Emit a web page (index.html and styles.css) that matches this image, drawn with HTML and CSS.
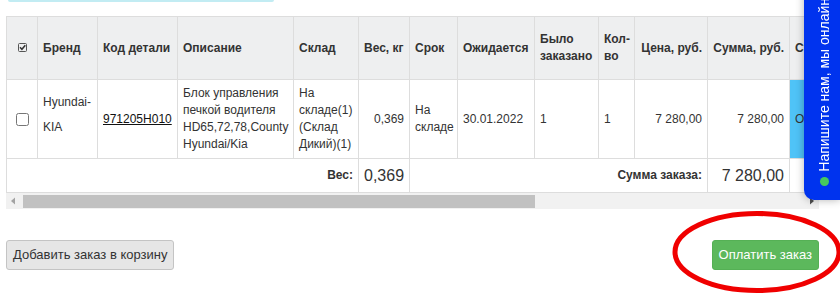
FILE: index.html
```html
<!DOCTYPE html>
<html lang="ru">
<head>
<meta charset="utf-8">
<title>Заказ</title>
<link rel="stylesheet" href="styles.css">
</head>
<body>
<div class="notice-edge"></div>
<main class="page">
  <div class="table-wrap">
    <table class="order">
      <colgroup>
        <col class="c-check"><col class="c-brand"><col class="c-code"><col class="c-desc"><col class="c-stock">
        <col class="c-weight"><col class="c-term"><col class="c-expected"><col class="c-ordered"><col class="c-qty">
        <col class="c-price"><col class="c-sum"><col class="c-status"><col class="c-comment"><col class="c-extra">
      </colgroup>
      <thead>
        <tr class="head-row">
          <th class="center">
            <svg class="check-icon" width="9" height="9" viewBox="0 0 9 9"><rect x="0.5" y="0.5" width="8" height="8" rx="1" fill="none" stroke="#555" stroke-width="1"/><path d="M2 4.3 L3.9 6.3 L7.3 2.2" fill="none" stroke="#333" stroke-width="1.5"/></svg>
          </th>
          <th>Бренд</th>
          <th>Код детали</th>
          <th>Описание</th>
          <th>Склад</th>
          <th>Вес, кг</th>
          <th>Срок</th>
          <th>Ожидается</th>
          <th>Было<br>заказано</th>
          <th>Кол-<br>во</th>
          <th class="right">Цена, руб.</th>
          <th class="right">Сумма, руб.</th>
          <th>Статус</th>
          <th>Комментарий</th>
          <th></th>
        </tr>
      </thead>
      <tbody>
        <tr class="body-row">
          <td class="center"><input type="checkbox" class="row-check"></td>
          <td class="brand">Hyundai-<br>KIA</td>
          <td><a href="#" class="part-link">971205H010</a></td>
          <td>Блок управления<br>печкой водителя<br>HD65,72,78,County<br>Hyundai/Kia</td>
          <td>На<br>складе(1)<br>(Склад<br>Дикий)(1)</td>
          <td class="right">0,369</td>
          <td>На<br>складе</td>
          <td>30.01.2022</td>
          <td>1</td>
          <td>1</td>
          <td class="right">7 280,00</td>
          <td class="right">7 280,00</td>
          <td class="status">Ожидается</td>
          <td></td>
          <td></td>
        </tr>
      </tbody>
      <tfoot>
        <tr class="foot-row">
          <td colspan="5" class="right label">Вес:</td>
          <td class="right total">0,369</td>
          <td colspan="5" class="right label">Сумма заказа:</td>
          <td class="right total">7 280,00</td>
          <td colspan="3"></td>
        </tr>
      </tfoot>
    </table>
  </div>
  <div class="hscroll" aria-hidden="true">
    <span class="hscroll-btn">
      <svg width="16" height="16" viewBox="0 0 16 16"><path d="M5 8 L9 4.5 L9 11.5 Z" fill="#a3a3a3"/></svg>
    </span>
    <span class="hscroll-track"><span class="hscroll-thumb"></span></span>
    <span class="hscroll-btn">
      <svg width="16" height="16" viewBox="0 0 16 16"><path d="M11 8 L7 4.5 L7 11.5 Z" fill="#505050"/></svg>
    </span>
  </div>
  <div class="actions">
    <button type="button" class="btn btn-default">Добавить заказ в корзину</button>
    <button type="button" class="btn btn-success">Оплатить заказ</button>
  </div>
</main>
<aside class="chat-tab">
  <span class="chat-label">Напишите нам, мы онлайн!</span>
  <span class="chat-dot"></span>
</aside>
<svg class="annotation" width="840" height="293" viewBox="0 0 840 293">
  <ellipse cx="757" cy="252" rx="82" ry="38.5" fill="none" stroke="#f00000" stroke-width="5"/>
</svg>
</body>
</html>
```

FILE: styles.css
```css
html, body {
  margin: 0;
  padding: 0;
  background: #fff;
}
body {
  font-family: "Liberation Sans", Arial, sans-serif;
  font-size: 12px;
  line-height: 17px;
  color: #333;
  overflow: hidden;
  height: 293px;
  position: relative;
}
.notice-edge {
  width: 266px;
  height: 2px;
  margin-left: 8px;
  background: #c2ecf3;
  border-radius: 0 0 4px 4px;
}
.page {
  width: 813px;
  padding: 14px 0 0 6px;
}
.table-wrap {
  width: 813px;
  overflow: hidden;
}
.hscroll {
  display: flex;
  width: 813px;
  height: 16px;
  background: #f1f1f1;
}
.hscroll-btn {
  flex: none;
  width: 16px;
  height: 16px;
  display: block;
}
.hscroll-btn svg {
  display: block;
}
.hscroll-track {
  flex: 1;
  display: flex;
  padding: 2px 0 1px 1px;
}
.hscroll-thumb {
  width: 512px;
  background: #c1c1c1;
}
.order {
  width: 1240px;
  table-layout: fixed;
  border-collapse: collapse;
  border: 1px solid #ddd;
}
.c-check { width: 31px; }
.c-brand { width: 60px; }
.c-code { width: 80px; }
.c-desc { width: 116px; }
.c-stock { width: 65px; }
.c-weight { width: 51px; }
.c-term { width: 48px; }
.c-expected { width: 77px; }
.c-ordered { width: 64px; }
.c-qty { width: 36px; }
.c-price { width: 73px; }
.c-sum { width: 82px; }
.c-status { width: 110px; }
.c-comment { width: 200px; }
.c-extra { width: 147px; }
.order th,
.order td {
  border: 1px solid #ddd;
  padding: 5px;
  vertical-align: middle;
  text-align: left;
  white-space: nowrap;
  overflow: hidden;
}
.order th {
  background: #eeeff0;
  font-weight: bold;
}
.head-row {
  height: 63px;
}
.order .center { text-align: center; }
.order .right { text-align: right; }
.check-icon {
  display: inline-block;
  vertical-align: middle;
  margin-top: -2px;
}
.row-check {
  margin: 0;
  width: 13px;
  height: 13px;
  vertical-align: middle;
}
.order td.brand {
  line-height: 25px;
  padding-bottom: 13px;
}
.part-link {
  color: #111;
  text-decoration: underline;
}
.order td.status {
  background: #4fc3f7;
}
.foot-row td {
  line-height: 23px;
}
.foot-row .label {
  font-weight: bold;
}
.foot-row .total {
  font-size: 16px;
}
.actions {
  display: flex;
  justify-content: space-between;
  margin-top: 31px;
}
.btn {
  font-family: "Liberation Sans", Arial, sans-serif;
  font-size: 13px;
  line-height: 18px;
  padding: 5px 6px;
  border-radius: 3px;
  border: 1px solid transparent;
  cursor: pointer;
}
.btn-default {
  background: #e6e6e6;
  border-color: #c4c4c4;
  color: #333;
}
.btn-success {
  background: #5cb85c;
  border-color: #55b055;
  color: #fff;
}
.chat-tab {
  position: fixed;
  right: 0;
  top: -20px;
  width: 36px;
  height: 220px;
  box-sizing: border-box;
  padding: 0 0 14px 4px;
  background: #0033ee;
  border-radius: 0 0 0 10px;
  box-shadow: 0 0 8px rgba(0, 0, 0, 0.3);
  display: flex;
  flex-direction: column;
  justify-content: flex-end;
  align-items: center;
  overflow: hidden;
}
.chat-label {
  writing-mode: vertical-rl;
  transform: rotate(180deg);
  color: #fff;
  font-size: 14px;
  line-height: 16px;
  white-space: nowrap;
  margin-bottom: 5px;
}
.chat-dot {
  width: 9px;
  height: 9px;
  border-radius: 50%;
  background: #46c85c;
  flex: none;
}
.annotation {
  position: absolute;
  left: 0;
  top: 0;
  pointer-events: none;
}
```
